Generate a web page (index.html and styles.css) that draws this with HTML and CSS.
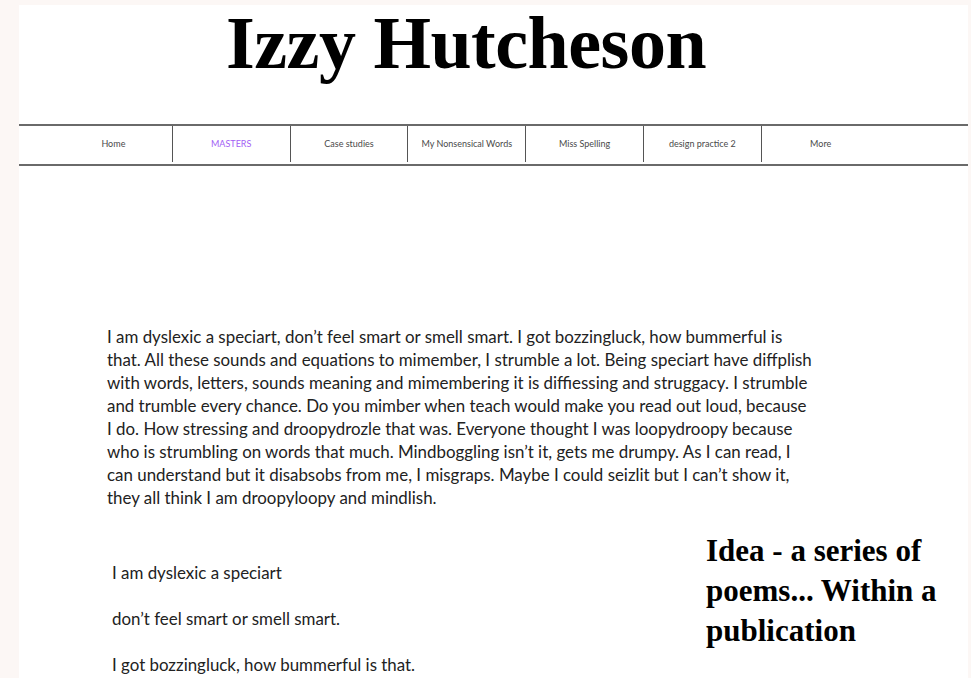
FILE: index.html
```html
<!DOCTYPE html>
<html lang="en">
<head>
<meta charset="utf-8">
<title>Izzy Hutcheson</title>
<link rel="stylesheet" href="styles.css">
</head>
<body>
<div class="page">
  <header class="masthead">
    <h1 class="site-title">Izzy Hutcheson</h1>
  </header>
  <nav class="menu">
    <a class="menu-item" href="#">Home</a>
    <a class="menu-item is-current" href="#">MASTERS</a>
    <a class="menu-item" href="#">Case studies</a>
    <a class="menu-item" href="#">My Nonsensical Words</a>
    <a class="menu-item" href="#">Miss Spelling</a>
    <a class="menu-item" href="#">design practice 2</a>
    <a class="menu-item last" href="#">More</a>
  </nav>
  <main class="content">
    <p class="story">I am dyslexic a speciart, don’t feel smart or smell smart. I got bozzingluck, how bummerful is<br>that. All these sounds and equations to mimember, I strumble a lot. Being speciart have diffplish<br>with words, letters, sounds meaning and mimembering it is diffiessing and struggacy. I strumble<br>and trumble every chance. Do you mimber when teach would make you read out loud, because<br>I do. How stressing and droopydrozle that was. Everyone thought I was loopydroopy because<br>who is strumbling on words that much. Mindboggling isn’t it, gets me drumpy. As I can read, I<br>can understand but it disabsobs from me, I misgraps. Maybe I could seizlit but I can’t show it,<br>they all think I am droopyloopy and mindlish.</p>
    <div class="split">
      <div class="poem">
        <p>I am dyslexic a speciart</p>
        <p>don’t feel smart or smell smart.</p>
        <p>I got bozzingluck, how bummerful is that.</p>
      </div>
      <h2 class="idea">Idea - a series of poems... Within a publication</h2>
    </div>
  </main>
</div>
</body>
</html>
```

FILE: styles.css
```css
html, body {
  margin: 0;
  padding: 0;
}

body {
  background: #fcf7f5;
  font-family: "Lato", "Noto Sans", sans-serif;
  color: #222;
  overflow: hidden;
}

.page {
  width: 949px;
  margin: 5px 0 0 19px;
  background: #fff;
  min-height: 700px;
}

.masthead {
  height: 119px;
  display: flex;
  justify-content: center;
}

.site-title {
  margin: -2px 55px 0 0;
  font-family: "Liberation Serif", "Times New Roman", serif;
  font-weight: 700;
  font-size: 74px;
  line-height: 80px;
  letter-spacing: -0.5px;
  color: #000;
}

.menu {
  display: flex;
  height: 38px;
  padding-left: 36px;
  border-top: 2px solid #6a6a6a;
  border-bottom: 2px solid #6a6a6a;
}

.menu-item {
  flex: none;
  width: 117.8px;
  height: 36px;
  display: flex;
  align-items: center;
  justify-content: center;
  border-right: 1px solid #555;
  font-size: 9px;
  color: #4a4a4a;
  text-decoration: none;
  padding-bottom: 1px;
  box-sizing: border-box;
}

.menu-item.last {
  border-right: none;
}

.menu-item.is-current {
  color: #a35ef5;
}

.content {
  padding: 159px 0 0 88px;
}

.story {
  margin: 0;
  font-size: 16.9px;
  line-height: 23px;
  color: #222;
}

.split {
  display: flex;
  margin-top: 22px;
}

.poem {
  width: 594px;
  padding-left: 5px;
  padding-top: 30px;
}

.poem p {
  margin: 0 0 23px;
  font-size: 16.9px;
  line-height: 23px;
}

.idea {
  margin: 0;
  width: 250px;
  font-family: "Liberation Serif", "Times New Roman", serif;
  font-weight: 700;
  font-size: 31px;
  line-height: 40px;
  color: #000;
}
```
